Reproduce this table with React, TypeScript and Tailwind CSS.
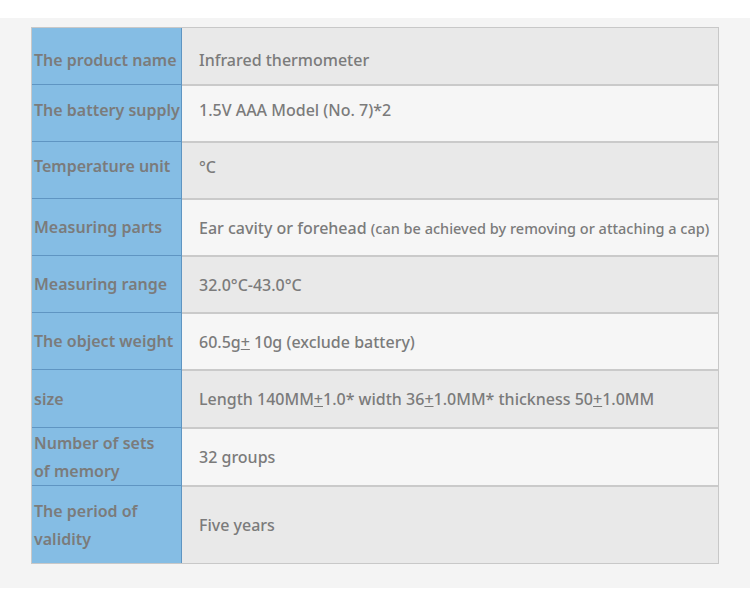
import React from 'react';

type Row = { label: React.ReactNode; value: React.ReactNode; h: string; shift?: string };

const pm = <span className="underline">+</span>;

const rows: Row[] = [
  { label: 'The product name', value: 'Infrared thermometer', h: 'h-[56px]', shift: 'pt-[8px]' },
  { label: 'The battery supply', value: '1.5V AAA Model (No. 7)*2', h: 'h-[57px]', shift: 'pb-[7px]' },
  { label: 'Temperature unit', value: '°C', h: 'h-[57px]', shift: 'pb-[8px]' },
  {
    label: 'Measuring parts',
    value: (
      <>
        Ear cavity or forehead{' '}
        <span className="text-[14.5px]">(can be achieved by removing or attaching a cap)</span>
      </>
    ),
    h: 'h-[57px]',
  },
  { label: 'Measuring range', value: '32.0°C-43.0°C', h: 'h-[57px]' },
  {
    label: 'The object weight',
    value: (
      <>
        60.5g{pm} 10g (exclude battery)
      </>
    ),
    h: 'h-[57px]',
  },
  {
    label: 'size',
    value: (
      <>
        Length 140MM{pm}1.0* width 36{pm}1.0MM* thickness 50{pm}1.0MM
      </>
    ),
    h: 'h-[58px]',
  },
  {
    label: (
      <>
        Number of sets
        <br />
        of memory
      </>
    ),
    value: '32 groups',
    h: 'h-[58px]',
  },
  {
    label: (
      <>
        The period of
        <br />
        validity
      </>
    ),
    value: 'Five years',
    h: 'h-[78px]',
  },
];

export default function App() {
  return (
    <div className="w-[750px] h-[613px] bg-white pt-[18px] font-['Noto_Sans',sans-serif]">
      <div className="bg-[#f4f4f4] h-[570px] pt-[9px] pl-[31px]">
        <div className="w-[688px] border border-[#c8c8c8]">
          {rows.map((r, i) => (
            <div key={i} className={`flex ${r.h} ${i > 0 ? 'border-t-2 border-t-[#cacaca]' : ''}`}>
              <div
                className={`w-[150px] shrink-0 bg-[#85bde4] border-r border-r-[#5f95c2] flex items-center pl-[2px] text-[16px] font-semibold leading-[28px] text-[#7b7b7b] ${
                  i > 0 ? '-mt-[2px] border-t border-t-[#5f95c2]' : ''
                } ${r.shift ?? ''}`}
              >
                <span>{r.label}</span>
              </div>
              <div
                className={`flex-1 flex items-center pl-[17px] text-[16px] font-medium text-[#7b7b7b] whitespace-nowrap ${
                  i % 2 === 0 ? 'bg-[#e9e9e9]' : 'bg-[#f6f6f6]'
                } ${r.shift ?? ''}`}
              >
                <span>{r.value}</span>
              </div>
            </div>
          ))}
        </div>
      </div>
    </div>
  );
}
